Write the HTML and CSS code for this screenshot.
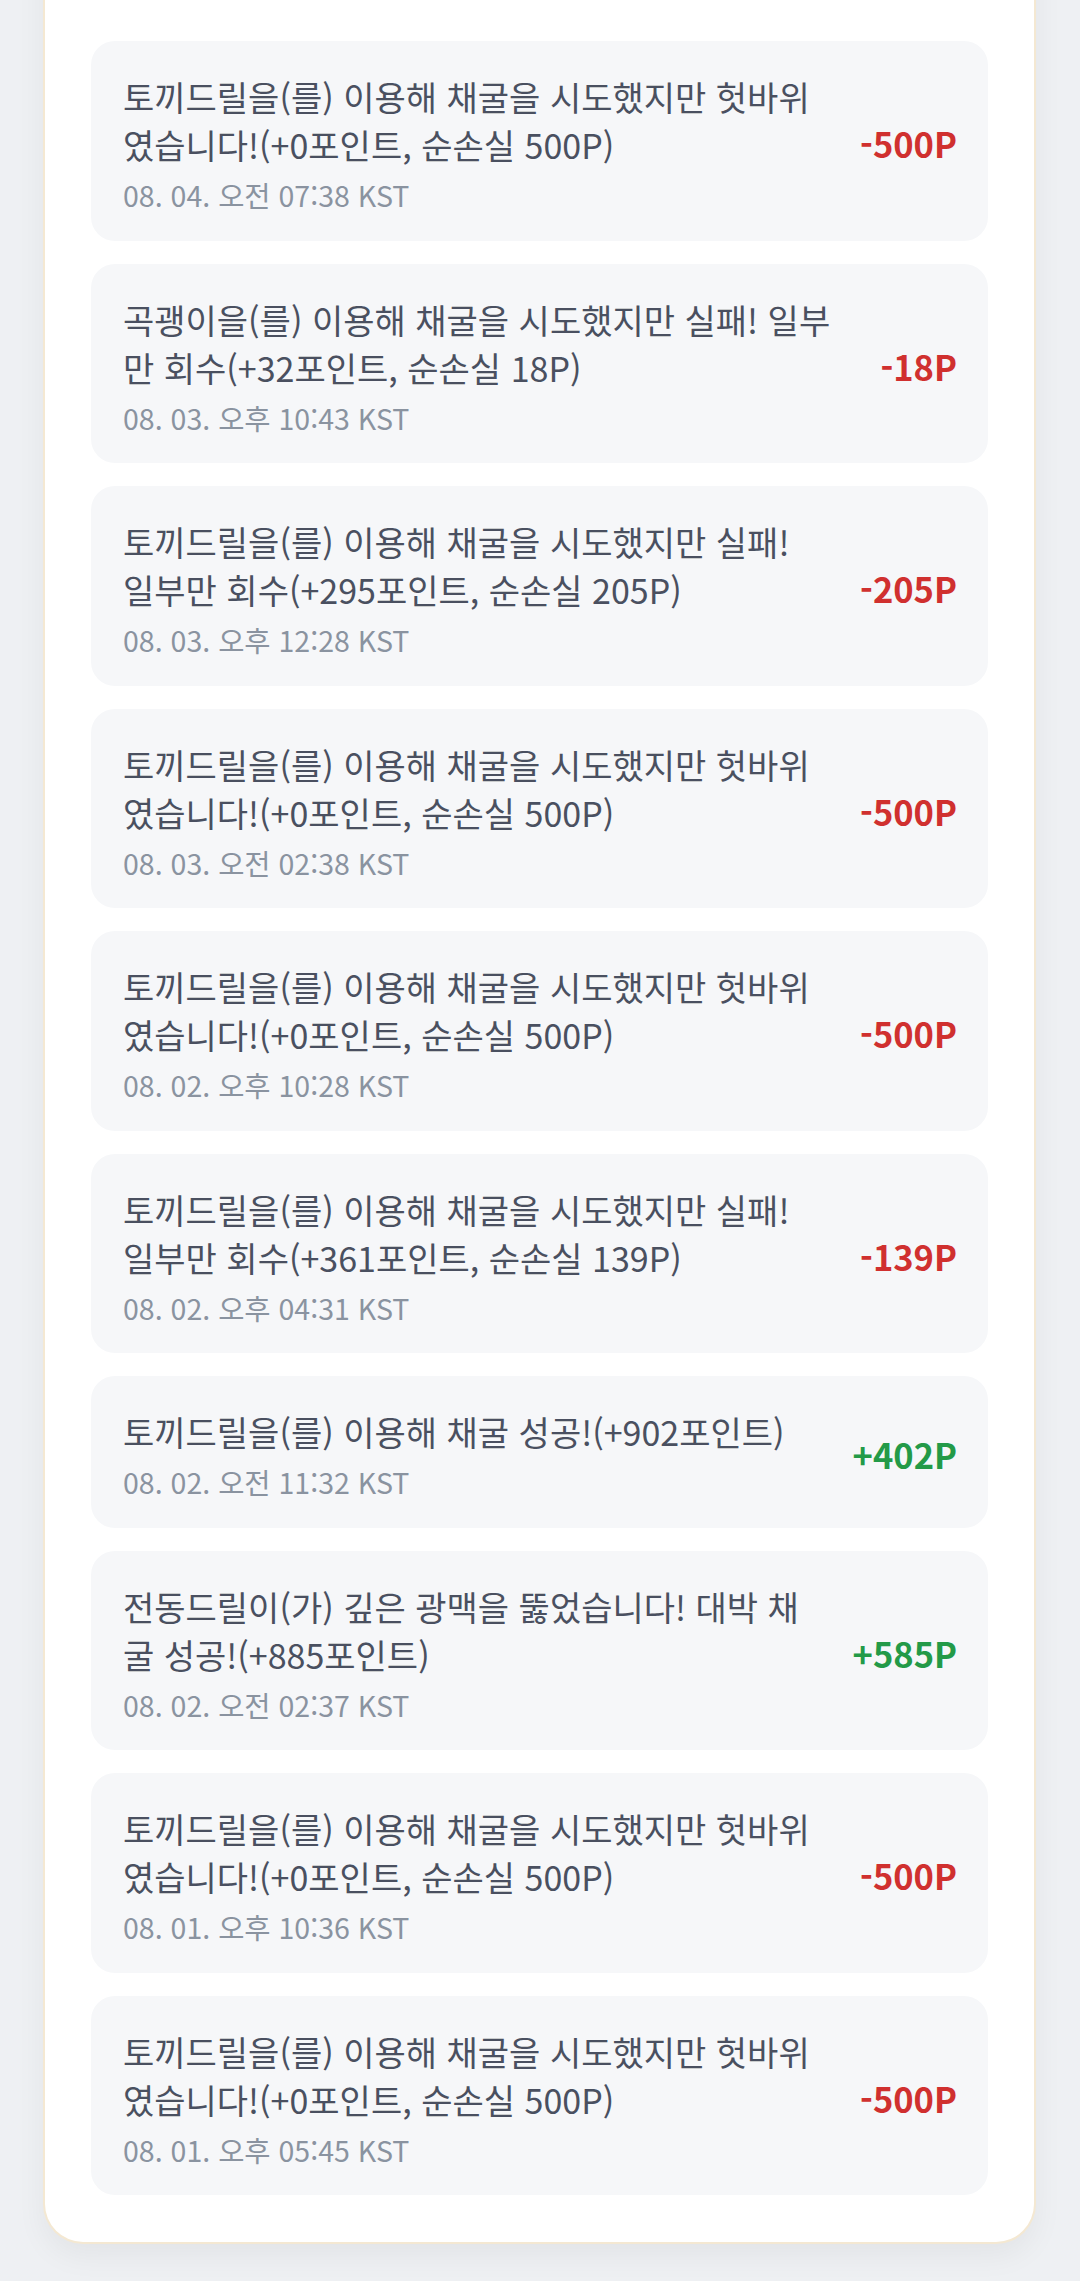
FILE: index.html
```html
<!DOCTYPE html>
<html lang="ko">
<head>
    <meta charset="UTF-8">
    <meta name="viewport" content="width=device-width, initial-scale=1.0">
    <title>채굴 기록</title>
    <link rel="stylesheet" href="styles.css">
</head>
<body>
    <div class="panel">
        <p class="panel-desc">최근 채굴 기록은 최대 50건까지 표시되며, 포인트 변동은 실시간으로 반영됩니다.</p>
        <ul class="log-list">
            <li class="log-item">
                <div class="log-body">
                    <div class="log-text">토끼드릴을(를) 이용해 채굴을 시도했지만 헛바위였습니다!(+0포인트, 순손실 500P)</div>
                    <div class="log-date">08. 04. 오전 07:38 KST</div>
                </div>
                <div class="log-amount minus">-500P</div>
            </li>
            <li class="log-item">
                <div class="log-body">
                    <div class="log-text">곡괭이을(를) 이용해 채굴을 시도했지만 실패! 일부만 회수(+32포인트, 순손실 18P)</div>
                    <div class="log-date">08. 03. 오후 10:43 KST</div>
                </div>
                <div class="log-amount minus">-18P</div>
            </li>
            <li class="log-item">
                <div class="log-body">
                    <div class="log-text">토끼드릴을(를) 이용해 채굴을 시도했지만 실패! 일부만 회수(+295포인트, 순손실 205P)</div>
                    <div class="log-date">08. 03. 오후 12:28 KST</div>
                </div>
                <div class="log-amount minus">-205P</div>
            </li>
            <li class="log-item">
                <div class="log-body">
                    <div class="log-text">토끼드릴을(를) 이용해 채굴을 시도했지만 헛바위였습니다!(+0포인트, 순손실 500P)</div>
                    <div class="log-date">08. 03. 오전 02:38 KST</div>
                </div>
                <div class="log-amount minus">-500P</div>
            </li>
            <li class="log-item">
                <div class="log-body">
                    <div class="log-text">토끼드릴을(를) 이용해 채굴을 시도했지만 헛바위였습니다!(+0포인트, 순손실 500P)</div>
                    <div class="log-date">08. 02. 오후 10:28 KST</div>
                </div>
                <div class="log-amount minus">-500P</div>
            </li>
            <li class="log-item">
                <div class="log-body">
                    <div class="log-text">토끼드릴을(를) 이용해 채굴을 시도했지만 실패! 일부만 회수(+361포인트, 순손실 139P)</div>
                    <div class="log-date">08. 02. 오후 04:31 KST</div>
                </div>
                <div class="log-amount minus">-139P</div>
            </li>
            <li class="log-item">
                <div class="log-body">
                    <div class="log-text">토끼드릴을(를) 이용해 채굴 성공!(+902포인트)</div>
                    <div class="log-date">08. 02. 오전 11:32 KST</div>
                </div>
                <div class="log-amount plus">+402P</div>
            </li>
            <li class="log-item">
                <div class="log-body">
                    <div class="log-text">전동드릴이(가) 깊은 광맥을 뚫었습니다! 대박 채굴 성공!(+885포인트)</div>
                    <div class="log-date">08. 02. 오전 02:37 KST</div>
                </div>
                <div class="log-amount plus">+585P</div>
            </li>
            <li class="log-item">
                <div class="log-body">
                    <div class="log-text">토끼드릴을(를) 이용해 채굴을 시도했지만 헛바위였습니다!(+0포인트, 순손실 500P)</div>
                    <div class="log-date">08. 01. 오후 10:36 KST</div>
                </div>
                <div class="log-amount minus">-500P</div>
            </li>
            <li class="log-item">
                <div class="log-body">
                    <div class="log-text">토끼드릴을(를) 이용해 채굴을 시도했지만 헛바위였습니다!(+0포인트, 순손실 500P)</div>
                    <div class="log-date">08. 01. 오후 05:45 KST</div>
                </div>
                <div class="log-amount minus">-500P</div>
            </li>
        </ul>
    </div>
</body>
</html>
```

FILE: styles.css
```css
body {
    margin: 0;
    padding: 0 0 40px;
    font-family: "Noto Sans CJK KR", "Noto Sans", sans-serif;
    background: #eef0f3;
    color: #4a5060;
}
.panel {
    /* page is scrolled: the top of the panel sits above the viewport */
    margin: -60px 44px 0 43px;
    padding: 0 46px 47px;
    background: #fff;
    border: 2px solid #f4e8d2;
    border-top: none;
    border-radius: 0 0 40px 40px;
    box-shadow: 0 12px 30px rgba(0, 0, 0, 0.05);
}
.panel-desc {
    margin: 0 0 39px;
    padding: 0 32px;
    font-size: 28px;
    line-height: 62px;
    color: #a2a9b3;
    white-space: nowrap;
    overflow: hidden;
}
.log-list {
    list-style: none;
    margin: 0;
    padding: 0;
    display: flex;
    flex-direction: column;
    gap: 23px;
}
.log-item {
    display: flex;
    align-items: center;
    gap: 36px;
    padding: 32px 31px 27.5px 32px;
    background: #f6f7f9;
    border-radius: 24px;
}
.log-body {
    flex: 1;
}
.log-text {
    font-size: 34px;
    line-height: 48px;
    color: #4a5060;
}
.log-date {
    margin-top: 8px;
    font-size: 28.5px;
    line-height: 36px;
    color: #8a93a0;
}
.log-amount {
    font-size: 34.5px;
    font-weight: 700;
    white-space: nowrap;
}
.minus {
    color: #d0302f;
}
.plus {
    color: #239a48;
}
```
